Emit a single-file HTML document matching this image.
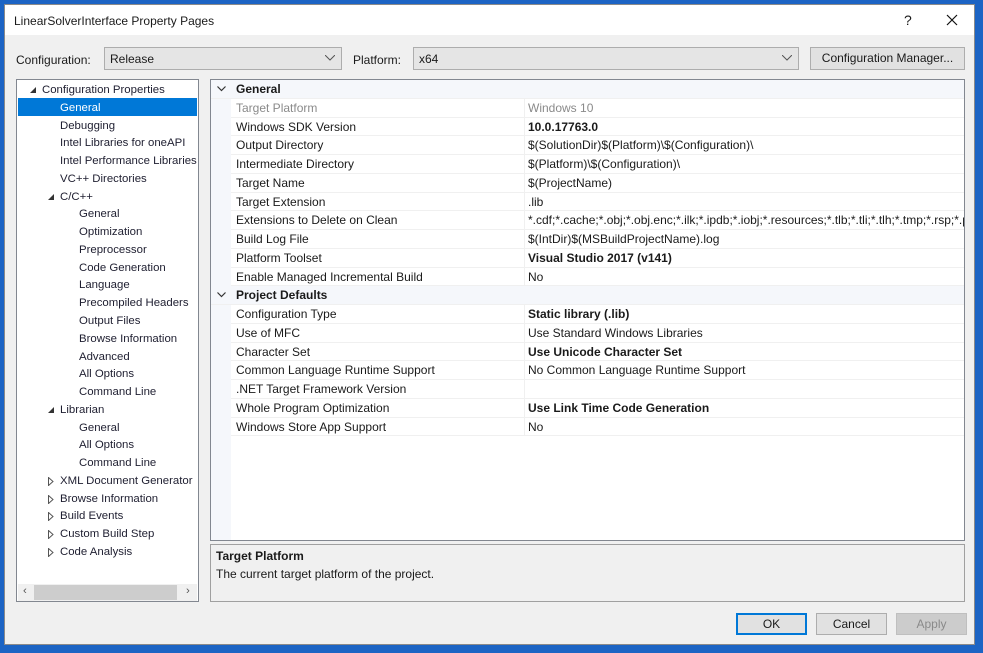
<!DOCTYPE html>
<html><head><meta charset="utf-8"><style>
*{box-sizing:border-box;margin:0;padding:0}
body{width:983px;height:653px;overflow:hidden;background:#1c64c4;font-family:"Liberation Sans",sans-serif;font-size:12px;color:#1a1a1a;position:relative}
.dlg{position:absolute;left:4px;top:4px;width:971px;height:641px;background:#f0f0f0;border:1px solid #8a8a8a}
.title{position:absolute;left:0;top:0;width:100%;height:30px;background:#fff}
.a{position:absolute;white-space:nowrap}
.combo{position:absolute;height:23px;background:#e5e5e5;border:1px solid #adadad;padding:4px 5px}
.combo svg{position:absolute;right:6px;top:7px}
.btn{position:absolute;height:22px;background:#e1e1e1;border:1px solid #adadad;text-align:center;line-height:20px}
.tree{position:absolute;left:11px;top:74px;width:183px;height:523px;background:#fff;border:1px solid #828790;font-size:11.4px}
.ti{position:absolute;height:18px;line-height:18px;white-space:nowrap;color:#1e1e30}
.grid{position:absolute;left:205px;top:74px;width:755px;height:462px;background:#fff;border:1px solid #828790;overflow:hidden}
.row{position:absolute;left:0;width:753px;height:18.75px;line-height:18px;border-bottom:1px solid #f0f0f0}
.row .n{position:absolute;left:25px}
.row .v{position:absolute;left:317px;white-space:nowrap}
.row .sep{position:absolute;left:313px;top:0;width:1px;height:100%;background:#f0f0f0}
.hdr{background:#f5f7fb;font-weight:bold}
.gut{position:absolute;left:0;top:0;width:20px;height:100%;background:#f5f7fb}
.desc{position:absolute;left:205px;top:539px;width:755px;height:58px;border:1px solid #a0a0a0;background:#f0f0f0}
</style></head><body>
<div class="dlg">
 <div class="title"></div>
 <div class="a" style="left:9px;top:9px">LinearSolverInterface Property Pages</div>
 <div class="a" style="left:899px;top:7px;font-size:14px">?</div>
 <svg class="a" style="left:941px;top:9px" width="12" height="12"><path d="M1 1L11 11M11 1L1 11" stroke="#111" stroke-width="1.2"/></svg>
 <div class="a" style="left:11px;top:48px">Configuration:</div>
 <div class="combo" style="left:99px;top:42px;width:238px">Release<svg width="10" height="6"><path d="M0 0L5 5L10 0" stroke="#555" fill="none"/></svg></div>
 <div class="a" style="left:348px;top:48px">Platform:</div>
 <div class="combo" style="left:408px;top:42px;width:386px">x64<svg width="10" height="6"><path d="M0 0L5 5L10 0" stroke="#555" fill="none"/></svg></div>
 <div class="btn" style="left:805px;top:42px;width:155px;height:23px;line-height:21px">Configuration Manager...</div>

 <div class="tree">
  <div style="position:absolute;left:1px;top:18px;width:179px;height:18px;background:#0078d7"></div>
  <div id="tr"></div>
  <div style="position:absolute;left:1px;top:504px;width:179px;height:17px;background:#f0f0f0"></div>
  <div style="position:absolute;left:17px;top:505px;width:143px;height:15px;background:#cdcdcd"></div>
  <div class="a" style="left:6px;top:505px;color:#555">&lsaquo;</div>
  <div class="a" style="left:169px;top:505px;color:#555">&rsaquo;</div>
 </div>

 <div class="grid"><div class="gut"></div><div id="gr"></div></div>

 <div class="desc">
  <div class="a" style="left:5px;top:4px;font-weight:bold">Target Platform</div>
  <div class="a" style="left:5px;top:22px">The current target platform of the project.</div>
 </div>

 <div class="btn" style="left:731px;top:608px;width:71px;border:1px solid #0078d7;box-shadow:inset 0 0 0 1px #0078d7">OK</div>
 <div class="btn" style="left:811px;top:608px;width:71px">Cancel</div>
 <div class="btn" style="left:891px;top:608px;width:71px;background:#cccccc;border-color:#bfbfbf;color:#8a8a8a">Apply</div>
</div>
<script>
var T=[[0,'Configuration Properties','o'],[2,'General'],[2,'Debugging'],[2,'Intel Libraries for oneAPI'],[2,'Intel Performance Libraries'],[2,'VC++ Directories'],[1,'C/C++','o'],[3,'General'],[3,'Optimization'],[3,'Preprocessor'],[3,'Code Generation'],[3,'Language'],[3,'Precompiled Headers'],[3,'Output Files'],[3,'Browse Information'],[3,'Advanced'],[3,'All Options'],[3,'Command Line'],[1,'Librarian','o'],[3,'General'],[3,'All Options'],[3,'Command Line'],[1,'XML Document Generator','c'],[1,'Browse Information','c'],[1,'Build Events','c'],[1,'Custom Build Step','c'],[1,'Code Analysis','c']];
var h='';
T.forEach(function(t,i){var y=1+i*17.77;var x=[25,43,43,62][t[0]];
 var c=i==1?'color:#fff':'';
 h+='<div class="ti" style="left:'+x+'px;top:'+y+'px;'+c+'">'+t[1]+'</div>';
 if(t[2]){var tx=x-12;
  if(t[2]=='o')h+='<svg class="a" style="left:'+tx+'px;top:'+(y+6)+'px" width="7" height="7"><path d="M6 0L6 6L0 6Z" fill="#333"/></svg>';
  else h+='<svg class="a" style="left:'+tx+'px;top:'+(y+5)+'px" width="6" height="9"><path d="M0.5 0.5L5 4.5L0.5 8.5Z" fill="none" stroke="#555"/></svg>';}
});
document.getElementById('tr').innerHTML=h;
var G=[['H','General'],['Target Platform','Windows 10','g'],['Windows SDK Version','10.0.17763.0','b'],['Output Directory','$(SolutionDir)$(Platform)\\$(Configuration)\\'],['Intermediate Directory','$(Platform)\\$(Configuration)\\'],['Target Name','$(ProjectName)'],['Target Extension','.lib'],['Extensions to Delete on Clean','*.cdf;*.cache;*.obj;*.obj.enc;*.ilk;*.ipdb;*.iobj;*.resources;*.tlb;*.tli;*.tlh;*.tmp;*.rsp;*.pgc;*.pgd'],['Build Log File','$(IntDir)$(MSBuildProjectName).log'],['Platform Toolset','Visual Studio 2017 (v141)','b'],['Enable Managed Incremental Build','No'],['H','Project Defaults'],['Configuration Type','Static library (.lib)','b'],['Use of MFC','Use Standard Windows Libraries'],['Character Set','Use Unicode Character Set','b'],['Common Language Runtime Support','No Common Language Runtime Support'],['.NET Target Framework Version',''],['Whole Program Optimization','Use Link Time Code Generation','b'],['Windows Store App Support','No']];
h='';
G.forEach(function(r,i){var y=i*18.75;
 if(r[0]=='H'){h+='<div class="row hdr" style="top:'+y+'px"><svg class="a" style="left:6px;top:6px" width="9" height="6"><path d="M0.5 0.5L4.5 4.5L8.5 0.5" stroke="#333" fill="none" stroke-width="1.2"/></svg><span class="n">'+r[1]+'</span></div>';return;}
 var st=r[2]=='b'?'font-weight:bold':(r[2]=='g'?'color:#8a8a8a':'');
 var ns=r[2]=='g'?'color:#8a8a8a':'';
 h+='<div class="row" style="top:'+y+'px;left:20px;width:733px"><span class="n" style="left:5px;'+ns+'">'+r[0]+'</span><div class="sep" style="left:293px"></div><span class="v" style="left:297px;'+st+'">'+r[1]+'</span></div>';
});
document.getElementById('gr').innerHTML=h;
</script>
</body></html>
